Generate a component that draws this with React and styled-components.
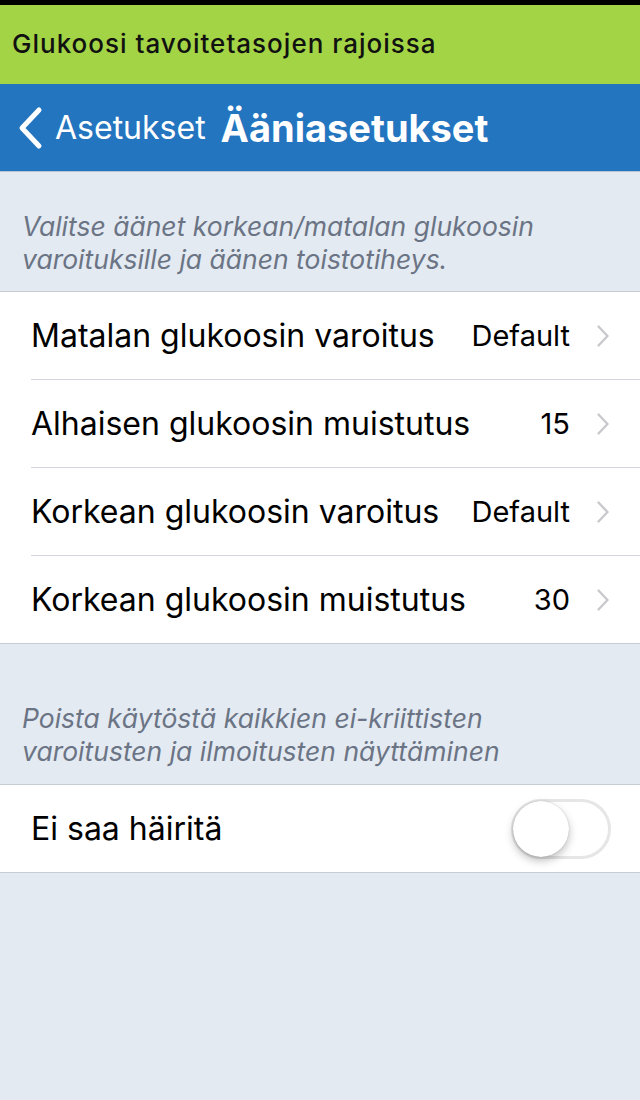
import styled, { createGlobalStyle } from "styled-components";

const GlobalStyle = createGlobalStyle`
  html, body {
    margin: 0;
    padding: 0;
    background: #e3eaf2;
  }
  body {
    font-family: Inter, "Liberation Sans", Arial, sans-serif;
  }
`;

const rows = [
  { label: "Matalan glukoosin varoitus", value: "Default" },
  { label: "Alhaisen glukoosin muistutus", value: "15" },
  { label: "Korkean glukoosin varoitus", value: "Default" },
  { label: "Korkean glukoosin muistutus", value: "30" },
];

function App() {
  return (
    <Screen>
      <GlobalStyle />
      <StatusStrip />
      <Banner>Glukoosi tavoitetasojen rajoissa</Banner>
      <NavBar>
        <BackButton>
          <svg width="28" height="44" viewBox="0 0 28 44">
            <path
              d="M23 4 L6 22 L23 40"
              fill="none"
              stroke="#fff"
              strokeWidth="5"
              strokeLinecap="round"
              strokeLinejoin="round"
            />
          </svg>
          <BackLabel>Asetukset</BackLabel>
        </BackButton>
        <Title>Ääniasetukset</Title>
      </NavBar>

      <SectionNote $top={38} $bottom={15}>
        Valitse äänet korkean/matalan glukoosin varoituksille ja äänen toistotiheys.
      </SectionNote>
      <Group>
        {rows.map((row, i) => (
          <Row key={row.label} $last={i === rows.length - 1}>
            <RowLabel>{row.label}</RowLabel>
            <RowValue>{row.value}</RowValue>
            <Chevron viewBox="0 0 14 24">
              <path
                d="M2.5 2.5 L11.5 12 L2.5 21.5"
                fill="none"
                stroke="#c8c8cd"
                strokeWidth="2.4"
                strokeLinecap="round"
                strokeLinejoin="round"
              />
            </Chevron>
          </Row>
        ))}
      </Group>

      <SectionNote $top={58} $bottom={16}>
        Poista käytöstä kaikkien ei-kriittisten varoitusten ja ilmoitusten näyttäminen
      </SectionNote>
      <Group>
        <Row $last>
          <RowLabel>Ei saa häiritä</RowLabel>
          <Toggle>
            <Knob />
          </Toggle>
        </Row>
      </Group>
    </Screen>
  );
}

export default App;

const Screen = styled.div`
  width: 640px;
  min-height: 1100px;
  background: #e3eaf2;
`;

const StatusStrip = styled.div`
  height: 5px;
  background: #000;
`;

const Banner = styled.div`
  height: 79px;
  background: #a3d445;
  color: #111;
  font-size: 26px;
  font-weight: 500;
  letter-spacing: 1px;
  display: flex;
  align-items: center;
  padding: 0 12px 2px;
  box-sizing: border-box;
`;

const NavBar = styled.div`
  height: 88px;
  background: #2475bf;
  display: flex;
  align-items: center;
  padding: 0 16px;
  gap: 15px;
  border-bottom: 1px solid #b9c4cf;
  box-sizing: border-box;
`;

const BackButton = styled.div`
  display: flex;
  align-items: center;
  gap: 11px;
  color: #fff;
`;

const BackLabel = styled.span`
  font-size: 32px;
`;

const Title = styled.h1`
  margin: 0;
  color: #fff;
  font-size: 38px;
  font-weight: 700;
`;

const SectionNote = styled.p`
  margin: 0;
  padding: ${(p) => p.$top}px 40px ${(p) => p.$bottom}px 22px;
  color: #6b7484;
  font-size: 26.5px;
  font-style: italic;
  line-height: 33px;
`;

const Group = styled.div`
  background: #fff;
  border-top: 1px solid #c8cdd3;
  border-bottom: 1px solid #c8cdd3;
  padding-left: 31px;
`;

const Row = styled.div`
  height: 87px;
  display: flex;
  align-items: center;
  padding-right: 30px;
  border-bottom: ${(p) => (p.$last ? "none" : "1px solid #d4d7db")};
`;

const RowLabel = styled.span`
  flex: 1;
  font-size: 32px;
  color: #000;
`;

const RowValue = styled.span`
  font-size: 29px;
  color: #000;
  margin-right: 26px;
`;

const Chevron = styled.svg`
  width: 14px;
  height: 24px;
`;

const Toggle = styled.div`
  position: relative;
  width: 100px;
  height: 60px;
  border-radius: 30px;
  border: 3px solid #e6e6e6;
  box-sizing: border-box;
  background: #fff;
  margin-right: -1px;
`;

const Knob = styled.div`
  position: absolute;
  left: -1px;
  top: -1px;
  width: 56px;
  height: 56px;
  border-radius: 50%;
  background: #fff;
  box-shadow: 0 4px 8px rgba(0, 0, 0, 0.25), 0 0 1px rgba(0, 0, 0, 0.3);
`;
